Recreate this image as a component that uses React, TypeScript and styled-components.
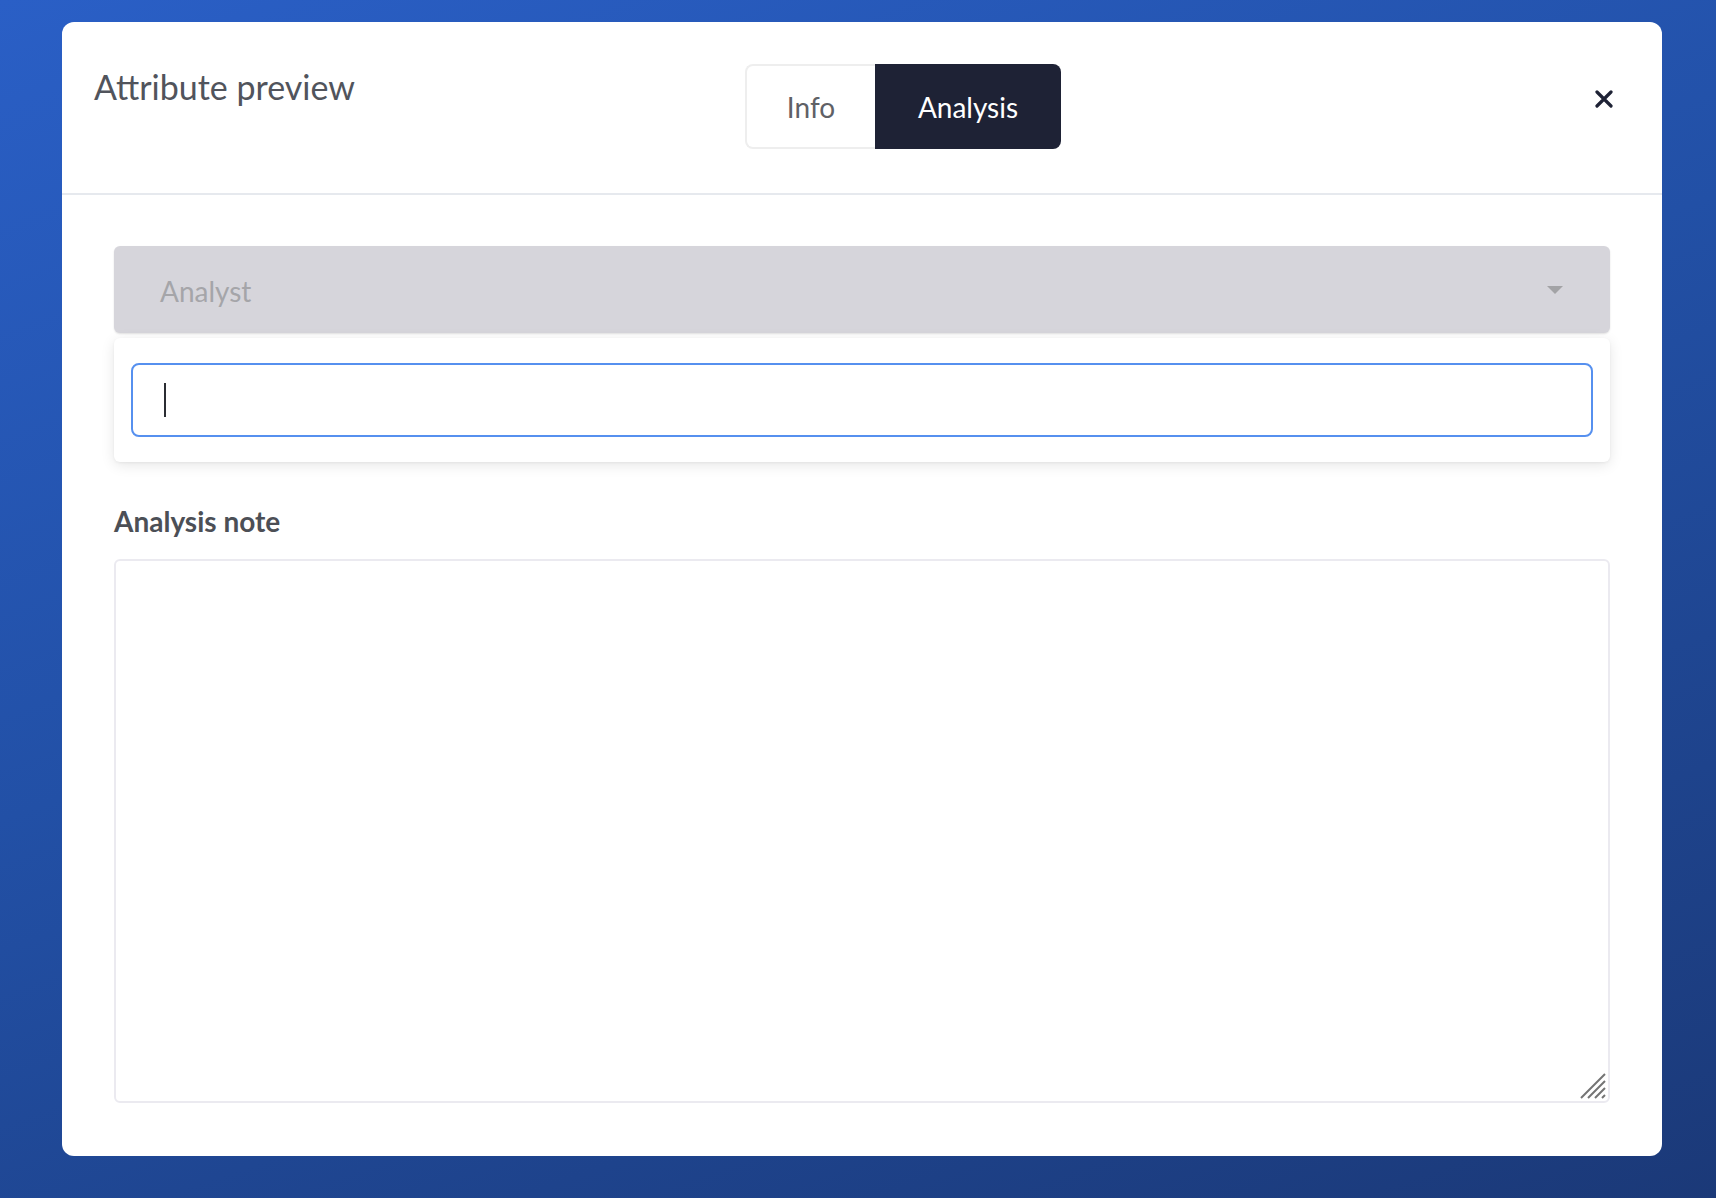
import React from "react";
import styled, { createGlobalStyle } from "styled-components";

const GlobalStyle = createGlobalStyle`
  * { box-sizing: border-box; }
  html, body { margin: 0; padding: 0; }
  body {
    font-family: Lato, "Open Sans", "Noto Sans", sans-serif;
    background: linear-gradient(160deg, #2a5fc6 0%, #2250a6 45%, #1b3978 100%);
    min-height: 100vh;
  }
  #root { min-height: 100vh; }
`;

const Page = styled.div`
  min-height: 100vh;
  padding: 22px 54px 42px 62px;
`;

const Modal = styled.div`
  background: #ffffff;
  border-radius: 12px;
  height: 1134px;
  display: flex;
  flex-direction: column;
  overflow: hidden;
`;

const Header = styled.header`
  display: grid;
  grid-template-columns: 651px auto 1fr;
  align-items: start;
  padding: 42px 49px 44px 32px;
  border-bottom: 2px solid #e6e9ee;
`;

const Title = styled.h2`
  margin: 3px 0 0;
  font-size: 34px;
  font-weight: 400;
  line-height: 1.2;
  color: #51545c;
`;

const Tabs = styled.div`
  display: flex;
  height: 85px;
`;

const Tab = styled.button<{ $active?: boolean }>`
  font-family: inherit;
  font-size: 28px;
  line-height: 1;
  padding: 0;
  cursor: pointer;
  border: ${(p) => (p.$active ? "none" : "2px solid #eeeeee")};
  border-right: none;
  background: ${(p) => (p.$active ? "#1e2235" : "#ffffff")};
  color: ${(p) => (p.$active ? "#ffffff" : "#5f6166")};
  width: ${(p) => (p.$active ? "186px" : "130px")};
  border-radius: ${(p) => (p.$active ? "0 8px 8px 0" : "8px 0 0 8px")};
`;

const CloseButton = styled.button`
  justify-self: end;
  margin-top: 26px;
  width: 18px;
  height: 18px;
  padding: 0;
  border: none;
  background: transparent;
  display: flex;
  cursor: pointer;
`;

const Body = styled.div`
  padding: 51px 52px 53px 52px;
  display: flex;
  flex-direction: column;
  flex: 1;
`;

const SelectBox = styled.div`
  height: 87px;
  background: #d6d5db;
  border-radius: 6px;
  box-shadow: 0 1px 2px rgba(0, 0, 0, 0.12);
  display: flex;
  align-items: center;
  justify-content: space-between;
  padding: 0 47px 0 46px;
`;

const SelectPlaceholder = styled.span`
  font-size: 28px;
  color: #a5a5a9;
  margin-top: 2px;
`;

const DropdownPanel = styled.div`
  margin-top: 5px;
  background: #ffffff;
  border-radius: 6px;
  box-shadow: 0 3px 14px rgba(0, 0, 0, 0.1), 0 1px 3px rgba(0, 0, 0, 0.05);
  padding: 25px 17px;
`;

const SearchBox = styled.div`
  height: 74px;
  border: 2px solid #5690ef;
  border-radius: 8px;
  display: flex;
  align-items: center;
  padding-left: 31px;
  background: #fff;
`;

const Caret = styled.span`
  display: block;
  width: 2px;
  height: 34px;
  background: #2b2d33;
`;

const FieldLabel = styled.label`
  margin-top: 43px;
  font-size: 28px;
  font-weight: 700;
  line-height: 1.2;
  color: #4c4f56;
`;

const NoteWrap = styled.div`
  position: relative;
  margin-top: 20px;
  height: 544px;
`;

const NoteArea = styled.textarea`
  display: block;
  height: 100%;
  width: 100%;
  border: 2px solid #ebeaf0;
  border-radius: 6px;
  resize: none;
  font-family: inherit;
  font-size: 24px;
  padding: 16px;
  outline: none;
`;

const ResizeGrip = styled.svg`
  position: absolute;
  right: 4px;
  bottom: 4px;
  pointer-events: none;
`;

export default function App() {
  return (
    <>
      <GlobalStyle />
      <Page>
        <Modal>
          <Header>
            <Title>Attribute preview</Title>
            <Tabs>
              <Tab>Info</Tab>
              <Tab $active>Analysis</Tab>
            </Tabs>
            <CloseButton aria-label="Close">
              <svg width="18" height="18" viewBox="0 0 18 18">
                <path d="M2 2 L16 16 M16 2 L2 16" stroke="#1e2235" strokeWidth="3.2" strokeLinecap="round" />
              </svg>
            </CloseButton>
          </Header>
          <Body>
            <SelectBox>
              <SelectPlaceholder>Analyst</SelectPlaceholder>
              <svg width="16" height="8" viewBox="0 0 16 8">
                <path d="M0 0 L16 0 L8 8 Z" fill="#a3a3a6" />
              </svg>
            </SelectBox>
            <DropdownPanel>
              <SearchBox>
                <Caret />
              </SearchBox>
            </DropdownPanel>
            <FieldLabel>Analysis note</FieldLabel>
            <NoteWrap>
              <NoteArea />
              <ResizeGrip width="26" height="26" viewBox="0 0 26 26">
                <path
                  d="M1 25 L25 1 M8 25 L25 8 M15 25 L25 15 M22 25 L25 22"
                  stroke="#747474"
                  strokeWidth="2"
                />
              </ResizeGrip>
            </NoteWrap>
          </Body>
        </Modal>
      </Page>
    </>
  );
}
